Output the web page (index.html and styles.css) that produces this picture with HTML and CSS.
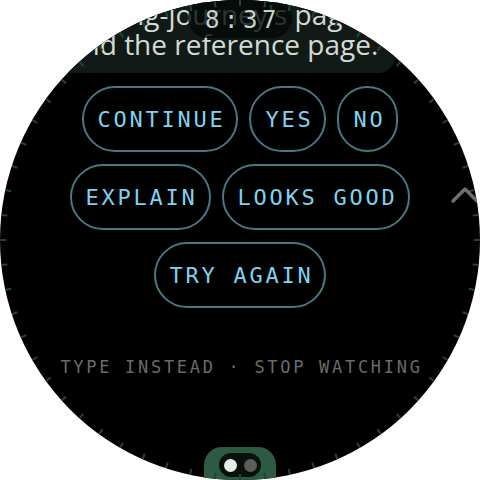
FILE: index.html
```html
<!DOCTYPE html>
<html lang="en">
<head>
<meta charset="utf-8">
<title>Watch reply</title>
<link rel="stylesheet" href="styles.css">
</head>
<body>
<div class="watch">
  <div class="card">
    <p class="msg">Feeling-journey's page<br>and the reference page.</p>
  </div>
  <div class="choices">
    <button class="chip">CONTINUE</button>
    <button class="chip">YES</button>
    <button class="chip">NO</button>
    <button class="chip">EXPLAIN</button>
    <button class="chip">LOOKS GOOD</button>
    <button class="chip">TRY AGAIN</button>
  </div>
  <div class="hint">TYPE INSTEAD · STOP WATCHING</div>
  <div class="pager">
    <div class="pager-inner">
      <span class="dot dot-on"></span>
      <span class="dot"></span>
    </div>
  </div>

  <div class="clock">8:37</div>

  <svg class="ticks" width="480" height="480" viewBox="0 0 480 480" aria-hidden="true">
    <defs><line id="t" x1="240" y1="0" x2="240" y2="6"/></defs>
    <g class="tick-g">
      <use href="#t"/><use href="#t" transform="rotate(6 240 240)"/><use href="#t" transform="rotate(12 240 240)"/><use href="#t" transform="rotate(18 240 240)"/><use href="#t" transform="rotate(24 240 240)"/><use href="#t" transform="rotate(30 240 240)"/>
      <use href="#t" transform="rotate(36 240 240)"/><use href="#t" transform="rotate(42 240 240)"/><use href="#t" transform="rotate(48 240 240)"/><use href="#t" transform="rotate(54 240 240)"/><use href="#t" transform="rotate(60 240 240)"/><use href="#t" transform="rotate(66 240 240)"/>
      <use href="#t" transform="rotate(72 240 240)"/><use href="#t" transform="rotate(78 240 240)"/><use href="#t" transform="rotate(84 240 240)"/><use href="#t" transform="rotate(90 240 240)"/><use href="#t" transform="rotate(96 240 240)"/><use href="#t" transform="rotate(102 240 240)"/>
      <use href="#t" transform="rotate(108 240 240)"/><use href="#t" transform="rotate(114 240 240)"/><use href="#t" transform="rotate(120 240 240)"/><use href="#t" transform="rotate(126 240 240)"/><use href="#t" transform="rotate(132 240 240)"/><use href="#t" transform="rotate(138 240 240)"/>
      <use href="#t" transform="rotate(144 240 240)"/><use href="#t" transform="rotate(150 240 240)"/><use href="#t" transform="rotate(156 240 240)"/><use href="#t" transform="rotate(162 240 240)"/><use href="#t" transform="rotate(168 240 240)"/><use href="#t" transform="rotate(174 240 240)"/>
      <use href="#t" transform="rotate(180 240 240)"/><use href="#t" transform="rotate(186 240 240)"/><use href="#t" transform="rotate(192 240 240)"/><use href="#t" transform="rotate(198 240 240)"/><use href="#t" transform="rotate(204 240 240)"/><use href="#t" transform="rotate(210 240 240)"/>
      <use href="#t" transform="rotate(216 240 240)"/><use href="#t" transform="rotate(222 240 240)"/><use href="#t" transform="rotate(228 240 240)"/><use href="#t" transform="rotate(234 240 240)"/><use href="#t" transform="rotate(240 240 240)"/><use href="#t" transform="rotate(246 240 240)"/>
      <use href="#t" transform="rotate(252 240 240)"/><use href="#t" transform="rotate(258 240 240)"/><use href="#t" transform="rotate(264 240 240)"/><use href="#t" transform="rotate(270 240 240)"/><use href="#t" transform="rotate(276 240 240)"/><use href="#t" transform="rotate(282 240 240)"/>
      <use href="#t" transform="rotate(288 240 240)"/><use href="#t" transform="rotate(294 240 240)"/><use href="#t" transform="rotate(300 240 240)"/><use href="#t" transform="rotate(306 240 240)"/><use href="#t" transform="rotate(312 240 240)"/><use href="#t" transform="rotate(318 240 240)"/>
      <use href="#t" transform="rotate(324 240 240)"/><use href="#t" transform="rotate(330 240 240)"/><use href="#t" transform="rotate(336 240 240)"/><use href="#t" transform="rotate(342 240 240)"/><use href="#t" transform="rotate(348 240 240)"/><use href="#t" transform="rotate(354 240 240)"/>
    </g>
    <polyline class="chevron" points="453,201 465,189 477,201"/>
  </svg>
</div>
</body>
</html>
```

FILE: styles.css
```css
* { box-sizing: border-box; }

html, body {
  margin: 0;
  padding: 0;
  background: #ffffff;
}

.watch {
  position: relative;
  width: 480px;
  height: 480px;
  border-radius: 50%;
  overflow: hidden;
  background: #000000;
  display: flex;
  flex-direction: column;
  align-items: center;
}

.card {
  align-self: flex-start;
  margin: -12px 0 0 50px;
  width: 345px;
  padding: 11px 6px 14px 17px;
  background: #111a17;
  border-radius: 0 0 16px 16px;
}

.msg {
  margin: 0;
  font-family: "Open Sans", Roboto, sans-serif;
  font-size: 28px;
  line-height: 30px;
  color: #d3dbd6;
  white-space: nowrap;
}

.choices {
  margin-top: 13px;
  width: 360px;
  display: flex;
  flex-wrap: wrap;
  justify-content: center;
  column-gap: 11px;
  row-gap: 12px;
}

.chip {
  height: 66px;
  padding: 0 11px 0 14px;
  border: 2px solid #497684;
  border-radius: 33px;
  background: #000000;
  color: #7fd2f0;
  font-family: "DejaVu Sans Mono", monospace;
  font-size: 22px;
  letter-spacing: 2.75px;
}

.hint {
  margin-top: 49px;
  padding-left: 3px;
  font-family: "DejaVu Sans Mono", monospace;
  font-size: 17px;
  line-height: 20px;
  letter-spacing: 2.7px;
  color: #6a6a6a;
  white-space: nowrap;
}

.pager {
  margin-top: auto;
  margin-bottom: -7px;
  width: 72px;
  height: 40px;
  padding-top: 6px;
  border-radius: 18px 18px 0 0;
  background: #2c5b42;
  display: flex;
  justify-content: center;
}

.pager-inner {
  width: 42px;
  height: 24px;
  border-radius: 12px;
  background: #0a110d;
  display: flex;
  align-items: center;
  justify-content: center;
  gap: 7px;
}

.dot {
  width: 13px;
  height: 13px;
  border-radius: 50%;
  background: #5c5e5c;
}

.dot-on {
  background: #e6ede6;
}

.clock {
  position: absolute;
  top: -2px;
  left: 188px;
  width: 104px;
  height: 40px;
  border-radius: 20px;
  background: rgba(4, 9, 7, 0.8);
  display: flex;
  align-items: center;
  justify-content: center;
  padding: 4px 0 0 6px;
  font-family: "DejaVu Sans Mono", monospace;
  font-size: 24px;
  letter-spacing: 4.5px;
  color: #c6d2ca;
}

.ticks {
  position: absolute;
  top: 0;
  left: 0;
  pointer-events: none;
}

.tick-g {
  stroke: #214637;
  stroke-width: 2;
}

.chevron {
  fill: none;
  stroke: #6e6e6e;
  stroke-width: 3.5;
  stroke-linecap: round;
  stroke-linejoin: round;
}
```
